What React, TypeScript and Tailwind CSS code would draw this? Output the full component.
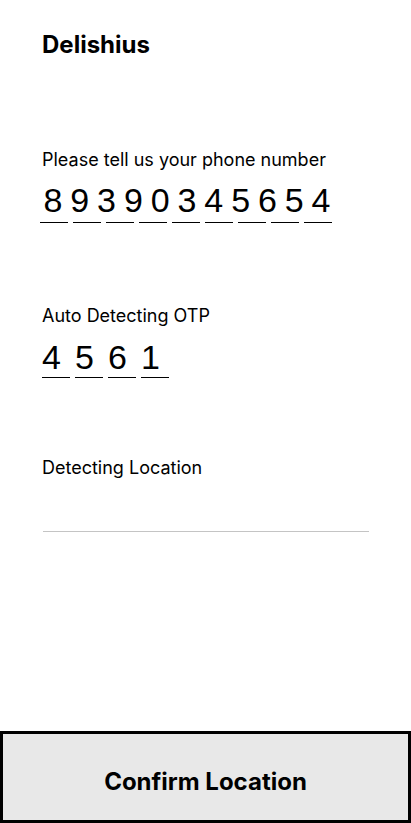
import React from "react";

const phone = "89390345654";
const otp = ["4", "5", "6", "1"];

export default function App() {
  return (
    <div
      className="min-h-[823px] h-screen bg-white flex flex-col text-black"
      style={{ fontFamily: "Inter, 'Noto Sans', sans-serif" }}
    >
      <div className="px-[42px] pt-[30px]">
        {/* Brand */}
        <h1 className="text-[24px] leading-[30px] font-bold">Delishius</h1>

        {/* Phone */}
        <p className="mt-[89px] text-[18px] leading-[22px]">
          Please tell us your phone number
        </p>
        <div className="mt-[9px]">
          <div
            className="ml-[1.5px] text-[34px] leading-[40px] tracking-[7.9px] whitespace-nowrap"
            style={{ fontFamily: "'Liberation Sans', Arial, sans-serif" }}
          >
            {phone}
          </div>
          <div className="ml-[-2px] mt-[2px] flex gap-[5px]">
            {Array.from({ length: 9 }).map((_, i) => (
              <span key={i} className="block w-[28px] h-px bg-black" />
            ))}
          </div>
        </div>

        {/* OTP */}
        <p className="mt-[82px] text-[18px] leading-[22px]">
          Auto Detecting OTP
        </p>
        <div className="mt-[10px] flex gap-[5px]">
          {otp.map((d, i) => (
            <span
              key={i}
              className="block w-[28px] border-b border-black text-[34px] leading-[40px]"
              style={{ fontFamily: "'Liberation Sans', Arial, sans-serif" }}
            >
              {d}
            </span>
          ))}
        </div>

        {/* Location */}
        <p className="mt-[79px] text-[18px] leading-[22px]">
          Detecting Location
        </p>
        <div className="mt-[52px] ml-px h-px bg-[#c4c4c4]" />
      </div>

      <button
        type="button"
        className="mt-auto h-[92px] w-full border-[3px] border-black bg-[#e8e8e8] pt-[10px] text-[24px] font-bold"
      >
        Confirm Location
      </button>
    </div>
  );
}
